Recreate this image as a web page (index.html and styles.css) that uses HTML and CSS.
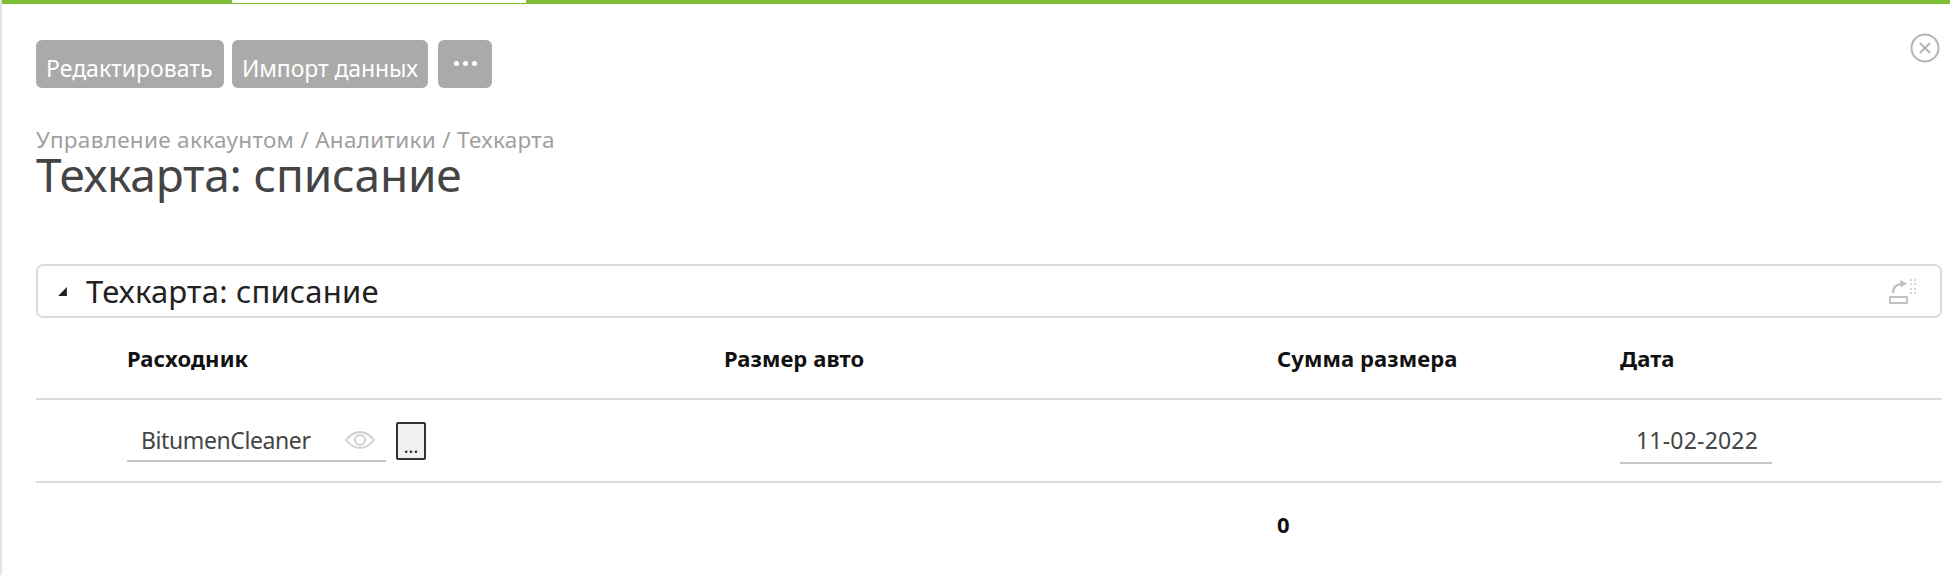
FILE: index.html
```html
<!DOCTYPE html>
<html lang="ru">
<head>
<meta charset="utf-8">
<title>Техкарта: списание</title>
<link rel="stylesheet" href="styles.css">
</head>
<body>
<div class="topbar"><div class="toptab"></div></div>
<main class="page">
  <button class="close" aria-label="Закрыть">
    <svg viewBox="0 0 30 30" width="30" height="30"><circle cx="15" cy="15" r="13.5" fill="none" stroke="#b5b5b5" stroke-width="2"/><path d="M10 10l10 10M20 10L10 20" stroke="#b5b5b5" stroke-width="2" fill="none"/></svg>
  </button>
  <div class="actions">
    <span class="btn">Редактировать</span>
    <span class="btn">Импорт данных</span>
    <span class="btn btn-more"><i></i><i></i><i></i></span>
  </div>
  <div class="crumbs">Управление аккаунтом / Аналитики / Техкарта</div>
  <h1 class="title">Техкарта: списание</h1>
  <section class="panel">
    <svg class="caret" viewBox="0 0 10 10" width="11" height="11"><path d="M9 1V9H1z" fill="#222"/></svg>
    <span class="panel-title">Техкарта: списание</span>
    <svg class="move" viewBox="0 0 28 28" width="28" height="28">
      <rect x="1" y="20" width="17" height="6" fill="none" stroke="#c2c2c2" stroke-width="2"/>
      <path d="M4 16c0-6 4-9 9-9" fill="none" stroke="#c2c2c2" stroke-width="2.4"/>
      <path d="M11 3l7 3.5-6 4z" fill="#c2c2c2"/>
      <path d="M21 2h2v2h-2zM25 2h2v2h-2zM21 6h2v2h-2zM25 6h2v2h-2zM21 11h2v2h-2zM25 11h2v2h-2zM21 15h2v2h-2zM25 15h2v2h-2z" fill="#d8d8d8"/>
    </svg>
  </section>
  <div class="row row-head">
    <div>Расходник</div><div>Размер авто</div><div>Сумма размера</div><div>Дата</div>
  </div>
  <div class="row row-body">
    <div class="lookup">
      <div class="field field-name"><span>BitumenCleaner</span>
        <svg viewBox="0 0 32 22" width="32" height="22"><path d="M2 11c4-5 9-8 14-8s10 3 14 8c-4 5-9 8-14 8S6 16 2 11z" fill="none" stroke="#d0d0d0" stroke-width="2"/><circle cx="16" cy="11" r="5" fill="none" stroke="#d0d0d0" stroke-width="2"/></svg>
      </div>
      <span class="dots">...</span>
    </div>
    <div></div><div></div>
    <div class="field field-date"><span>11-02-2022</span></div>
  </div>
  <div class="row row-foot">
    <div></div><div></div><div>0</div><div></div>
  </div>
</main>
</body>
</html>
```
FILE: styles.css
```css
* { box-sizing: border-box; }
html, body { margin: 0; height: 100%; overflow: hidden; }
body {
  background: #fff;
  font-family: "Noto Sans", "Open Sans", sans-serif;
  border-left: 2px solid #e4e4e4;
}
.topbar {
  height: 4px;
  margin-left: -2px;
  background: #7cbd35;
  padding-left: 232px;
}
.toptab { width: 294px; height: 3px; background: #fff; }
.page { position: relative; padding: 36px 8px 0 34px; }
.close {
  position: absolute;
  top: 29px;
  right: 10px;
  padding: 0;
  border: 0;
  background: none;
  line-height: 0;
}
.actions { display: flex; gap: 8px; height: 48px; }
.btn {
  display: flex;
  align-items: center;
  gap: 4px;
  padding: 7px 10px 0;
  background: #aaa;
  border-radius: 6px;
  color: #fff;
  font-size: 23px;
  letter-spacing: -0.1px;
  white-space: nowrap;
}
.actions .btn:nth-child(1) { width: 188px; letter-spacing: 0; }
.actions .btn:nth-child(2) { width: 196px; margin-right: 2px; }
.btn-more { width: 54px; justify-content: center; padding: 0 0 2px; }
.btn-more i { width: 5px; height: 5px; border-radius: 50%; background: #fff; }
.crumbs {
  margin-top: 38px;
  color: #a0a0a0;
  font-size: 22.5px;
  line-height: 28px;
  letter-spacing: 0.3px;
  white-space: nowrap;
}
.title {
  margin: 0;
  color: #444;
  font-size: 46px;
  font-weight: 400;
  line-height: 40px;
  letter-spacing: -0.2px;
}
.panel {
  display: flex;
  align-items: center;
  height: 54px;
  margin: 70px 0 0 0;
  padding: 0 23px 0 19px;
  border: 2px solid #dcdcdc;
  border-radius: 7px;
}
.caret { margin-right: 18px; }
.panel-title { flex: 1; font-size: 31px; color: #222; letter-spacing: 0.2px; }
.row {
  display: grid;
  grid-template-columns: 597px 553px 343px 1fr;
  padding-left: 91px;
  border-bottom: 2px solid #dcdcdc;
}
.row-head { height: 82px; align-items: center; font-size: 22px; font-weight: 700; color: #111; letter-spacing: 0.1px; }
.row-body { height: 83px; align-items: start; }
.row-foot { height: 82px; border-bottom: 0; align-items: center; font-size: 22px; font-weight: 700; color: #111; }
.lookup { display: flex; gap: 10px; align-items: flex-start; margin-top: 22px; }
.field {
  display: flex;
  align-items: center;
  justify-content: space-between;
  height: 40px;
  padding-bottom: 3px;
  border-bottom: 2px solid #c8c8c8;
  color: #444;
  font-size: 23px;
  letter-spacing: -0.4px;
  white-space: nowrap;
}
.field-name { width: 259px; padding-right: 10px; padding-left: 14px; }
.field-date { width: 152px; height: 42px; margin-top: 22px; padding-left: 16px; letter-spacing: 0.2px; padding-bottom: 5px; }
.dots {
  display: flex;
  align-items: flex-end;
  justify-content: center;
  width: 30px;
  height: 38px;
  background: #f0f0f0;
  border: 2px solid #333;
  border-radius: 2px;
  color: #222;
  font-size: 18px;
  line-height: 24px;
}
```
